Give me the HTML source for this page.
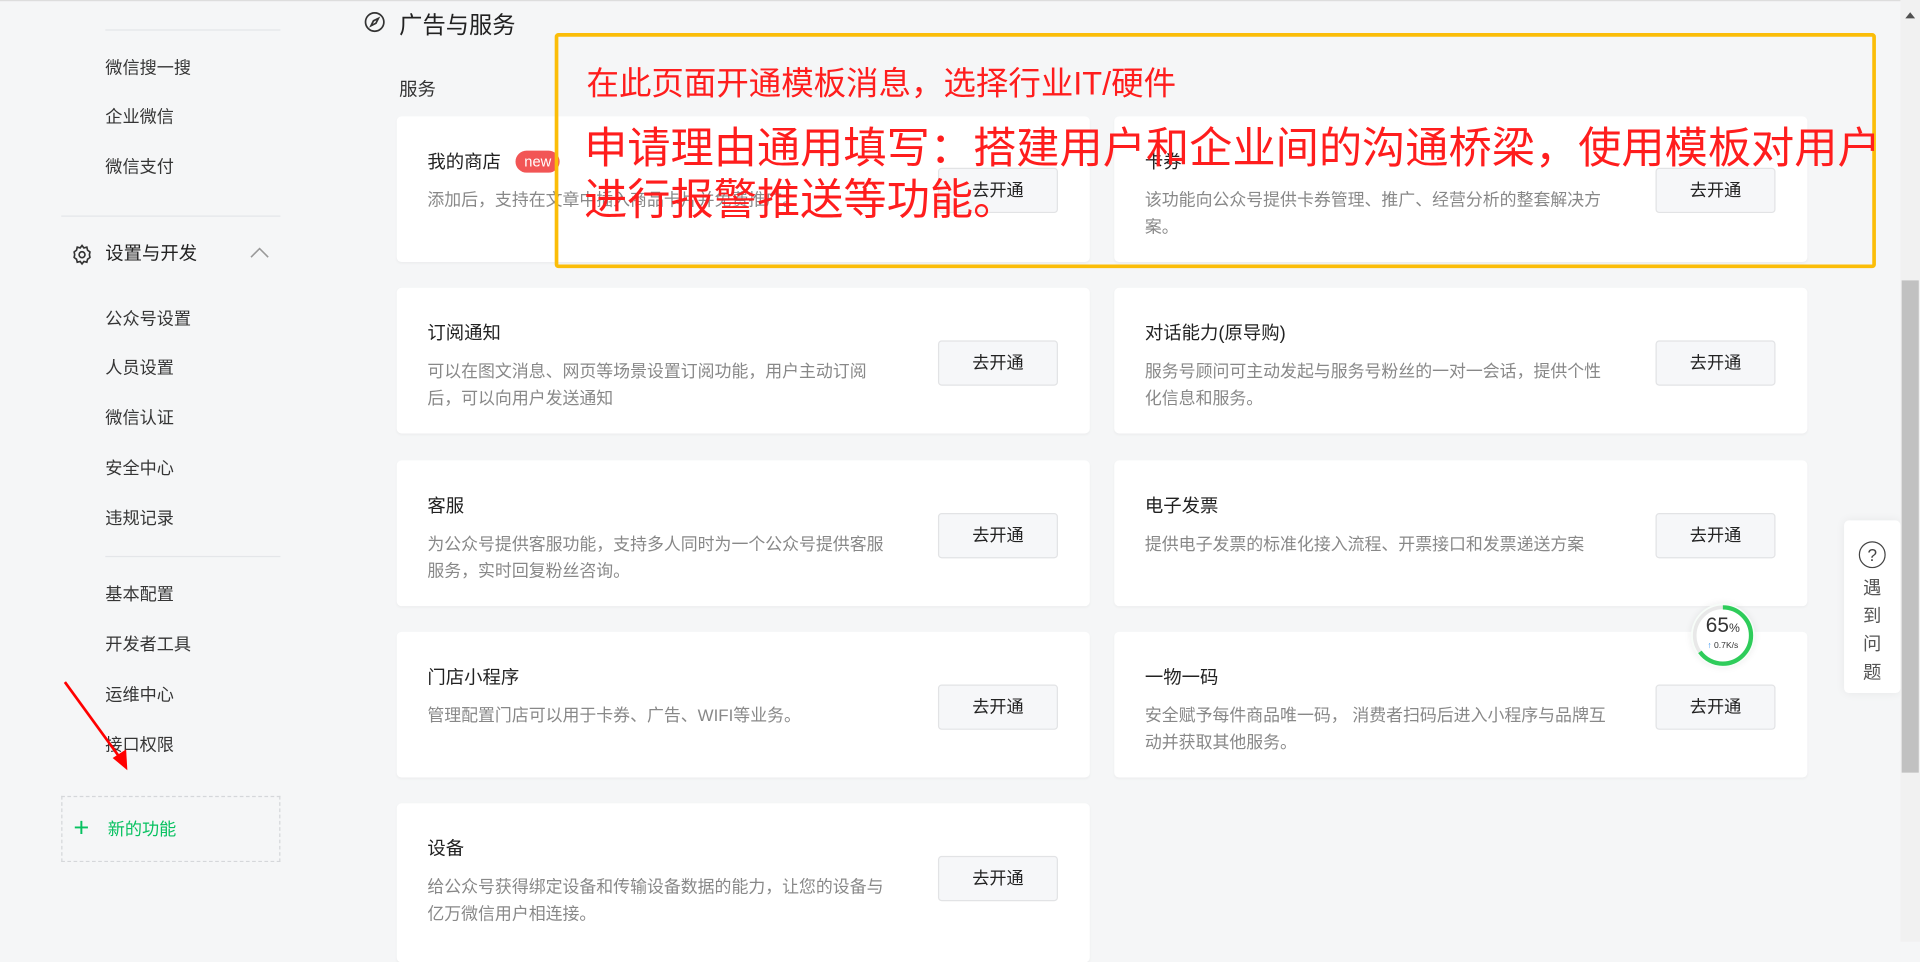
<!DOCTYPE html>
<html><head><meta charset="utf-8"><style>
*{margin:0;padding:0;box-sizing:border-box}
html,body{width:1920px;height:942px;overflow:hidden;background:#f5f6f7}
#w{position:absolute;left:0;top:0;width:1568px;height:769px;transform:scale(1.22449);transform-origin:0 0;font-family:"Liberation Sans","Noto Sans CJK SC",sans-serif;color:#333}
.a{position:absolute}
.si{position:absolute;left:86px;font-size:14px;color:#353535;line-height:20px}
.hr{position:absolute;height:1px;background:#e4e6e9}
.card{position:absolute;width:566px;height:119px;background:#fff;border-radius:4px;box-shadow:0 1px 2px rgba(0,0,0,.04)}
.card .t{position:absolute;left:25px;top:28px;font-size:15px;color:#222;line-height:20px}
.card .d{position:absolute;left:25px;top:58px;width:385px;font-size:13.8px;color:#888;line-height:21.5px}
.card .b{position:absolute;right:26px;top:43px;width:98px;height:37px;border:1px solid #e2e3e5;background:#f6f7f9;border-radius:3px;font-size:14px;line-height:35px;text-align:center;color:#222}
.red{position:absolute;color:#ff1d1d;white-space:nowrap}
</style></head><body><div id="w">
<div class="a" style="left:0;top:0;width:1568px;height:1px;background:#ddd"></div>
<div class="hr" style="left:86px;top:24px;width:143px"></div>
<div class="si" style="top:45px">微信搜一搜</div>
<div class="si" style="top:85px">企业微信</div>
<div class="si" style="top:126px">微信支付</div>
<div class="hr" style="left:50px;top:176px;width:179px"></div>
<svg class="a" style="left:58px;top:199px" width="18" height="18" viewBox="0 0 24 24" fill="none" stroke="#333" stroke-width="1.8"><circle cx="12" cy="12" r="3.2"/><path d="M12 2l2 2.6 3.2-.8.8 3.2L20.6 9 20 12l.6 3-2.6 2 -.8 3.2-3.2-.8L12 22l-2-2.6-3.2.8L6 17 3.4 15 4 12l-.6-3L6 7l.8-3.2 3.2.8z"/></svg>
<div class="si" style="top:198px;font-size:15px;color:#222">设置与开发</div>
<svg class="a" style="left:204px;top:201px" width="16" height="10" viewBox="0 0 16 10" fill="none" stroke="#999" stroke-width="1.3"><path d="M1 9l7-7 7 7"/></svg>
<div class="si" style="top:250px">公众号设置</div>
<div class="si" style="top:290px">人员设置</div>
<div class="si" style="top:331px">微信认证</div>
<div class="si" style="top:372px">安全中心</div>
<div class="si" style="top:413px">违规记录</div>
<div class="hr" style="left:86px;top:454px;width:143px"></div>
<div class="si" style="top:475px">基本配置</div>
<div class="si" style="top:516px">开发者工具</div>
<div class="si" style="top:557px">运维中心</div>
<div class="si" style="top:598px">接口权限</div>
<div class="a" style="left:50px;top:650px;width:179px;height:54px;border:1px dashed #d5d7da"></div>
<div class="a" style="left:60px;top:664px;font-size:22px;color:#07c160;line-height:24px">+</div>
<div class="a" style="left:88px;top:667px;font-size:14px;color:#07c160">新的功能</div>
<svg class="a" style="left:48px;top:552px" width="62" height="82" viewBox="0 0 62 82"><path d="M5 5L53 71" stroke="#f00" stroke-width="2.2"/><path d="M56 77L44 67 55 60z" fill="#f00"/></svg>

<svg class="a" style="left:297px;top:9px" width="18" height="18" viewBox="0 0 18 18" fill="none" stroke="#333" stroke-width="1.4"><circle cx="9" cy="9" r="7.5"/><path d="M12 6l-4 2-2 4 4-2z"/></svg>
<div class="a" style="left:326px;top:6px;font-size:19px;color:#222">广告与服务</div>
<div class="a" style="left:326px;top:62px;font-size:15px;color:#333">服务</div>

<div class="card" style="left:324px;top:95px"><div class="t">我的商店 <span style="display:inline-block;background:#f25555;color:#fff;border-radius:10px;font-size:12px;line-height:18px;padding:0 7px;margin-left:8px;vertical-align:1px">new</span></div><div class="d">添加后，支持在文章中插入商品卡片并免费推广。</div><div class="b" style="top:42px;right:26px">去开通</div></div>
<div class="card" style="left:910px;top:95px"><div class="t">卡券</div><div class="d">该功能向公众号提供卡券管理、推广、经营分析的整套解决方案。</div><div class="b" style="top:42px">去开通</div></div>
<div class="card" style="left:324px;top:235px"><div class="t">订阅通知</div><div class="d">可以在图文消息、网页等场景设置订阅功能，用户主动订阅后，可以向用户发送通知</div><div class="b">去开通</div></div>
<div class="card" style="left:910px;top:235px"><div class="t">对话能力(原导购)</div><div class="d">服务号顾问可主动发起与服务号粉丝的一对一会话，提供个性化信息和服务。</div><div class="b">去开通</div></div>
<div class="card" style="left:324px;top:376px"><div class="t">客服</div><div class="d">为公众号提供客服功能，支持多人同时为一个公众号提供客服服务，实时回复粉丝咨询。</div><div class="b">去开通</div></div>
<div class="card" style="left:910px;top:376px"><div class="t">电子发票</div><div class="d">提供电子发票的标准化接入流程、开票接口和发票递送方案</div><div class="b">去开通</div></div>
<div class="card" style="left:324px;top:516px"><div class="t">门店小程序</div><div class="d">管理配置门店可以用于卡券、广告、WIFI等业务。</div><div class="b">去开通</div></div>
<div class="card" style="left:910px;top:516px"><div class="t">一物一码</div><div class="d">安全赋予每件商品唯一码， 消费者扫码后进入小程序与品牌互动并获取其他服务。</div><div class="b">去开通</div></div>
<div class="card" style="left:324px;top:656px;height:130px"><div class="t">设备</div><div class="d">给公众号获得绑定设备和传输设备数据的能力，让您的设备与亿万微信用户相连接。</div><div class="b">去开通</div></div>

<div class="a" style="left:453px;top:27px;width:1079px;height:192px;border:3px solid #fbbd08;border-radius:3px"></div>
<div class="red" style="left:479px;top:52px;font-size:26.5px;line-height:32px">在此页面开通模板消息，选择行业IT/硬件</div>
<div class="red" style="left:477px;top:100px;font-size:35.3px;line-height:44px">申请理由通用填写：搭建用户和企业间的沟通桥梁，使用模板对用户</div>
<div class="red" style="left:477px;top:142px;font-size:35.3px;line-height:44px">进行报警推送等功能。</div>

<div class="a" style="left:1381px;top:493px;width:52px;height:52px;border-radius:50%;background:radial-gradient(#fff 55%,#e3f7e8);box-shadow:0 0 6px rgba(0,0,0,.08)"></div>
<svg class="a" style="left:1381px;top:493px" width="52" height="52" viewBox="0 0 52 52"><circle cx="26" cy="26" r="23" fill="none" stroke="#e8e8e8" stroke-width="3"/><circle cx="26" cy="26" r="23" fill="none" stroke="#2ecc5a" stroke-width="3.5" stroke-dasharray="94 200" transform="rotate(-90 26 26)"/></svg>
<div class="a" style="left:1381px;top:501px;width:52px;text-align:center;font-size:17px;color:#333;line-height:20px">65<span style="font-size:10px">%</span></div>
<div class="a" style="left:1381px;top:524px;width:52px;text-align:center;font-size:7px;color:#333"><span style="color:#2a8cf0">↑</span> 0.7K/s</div>

<div class="a" style="left:1506px;top:425px;width:46px;height:141px;background:#fff;border-radius:4px;box-shadow:0 0 8px rgba(0,0,0,.06)"></div>
<div class="a" style="left:1518px;top:442px;width:22px;height:22px;border:1.3px solid #444;border-radius:50%;text-align:center;font-size:14px;line-height:20px;color:#444">?</div>
<div class="a" style="left:1517px;top:469px;width:24px;font-size:15px;line-height:23px;color:#555;text-align:center">遇<br>到<br>问<br>题</div>

<div class="a" style="left:1552px;top:0;width:16px;height:769px;background:#f1f1f1"></div>
<div class="a" style="left:1553px;top:229px;width:14px;height:402px;background:#c1c1c1"></div>
<div class="a" style="left:1556px;top:10px;width:0;height:0;border-left:4px solid transparent;border-right:4px solid transparent;border-bottom:5px solid #505050"></div>
</div></body></html>
